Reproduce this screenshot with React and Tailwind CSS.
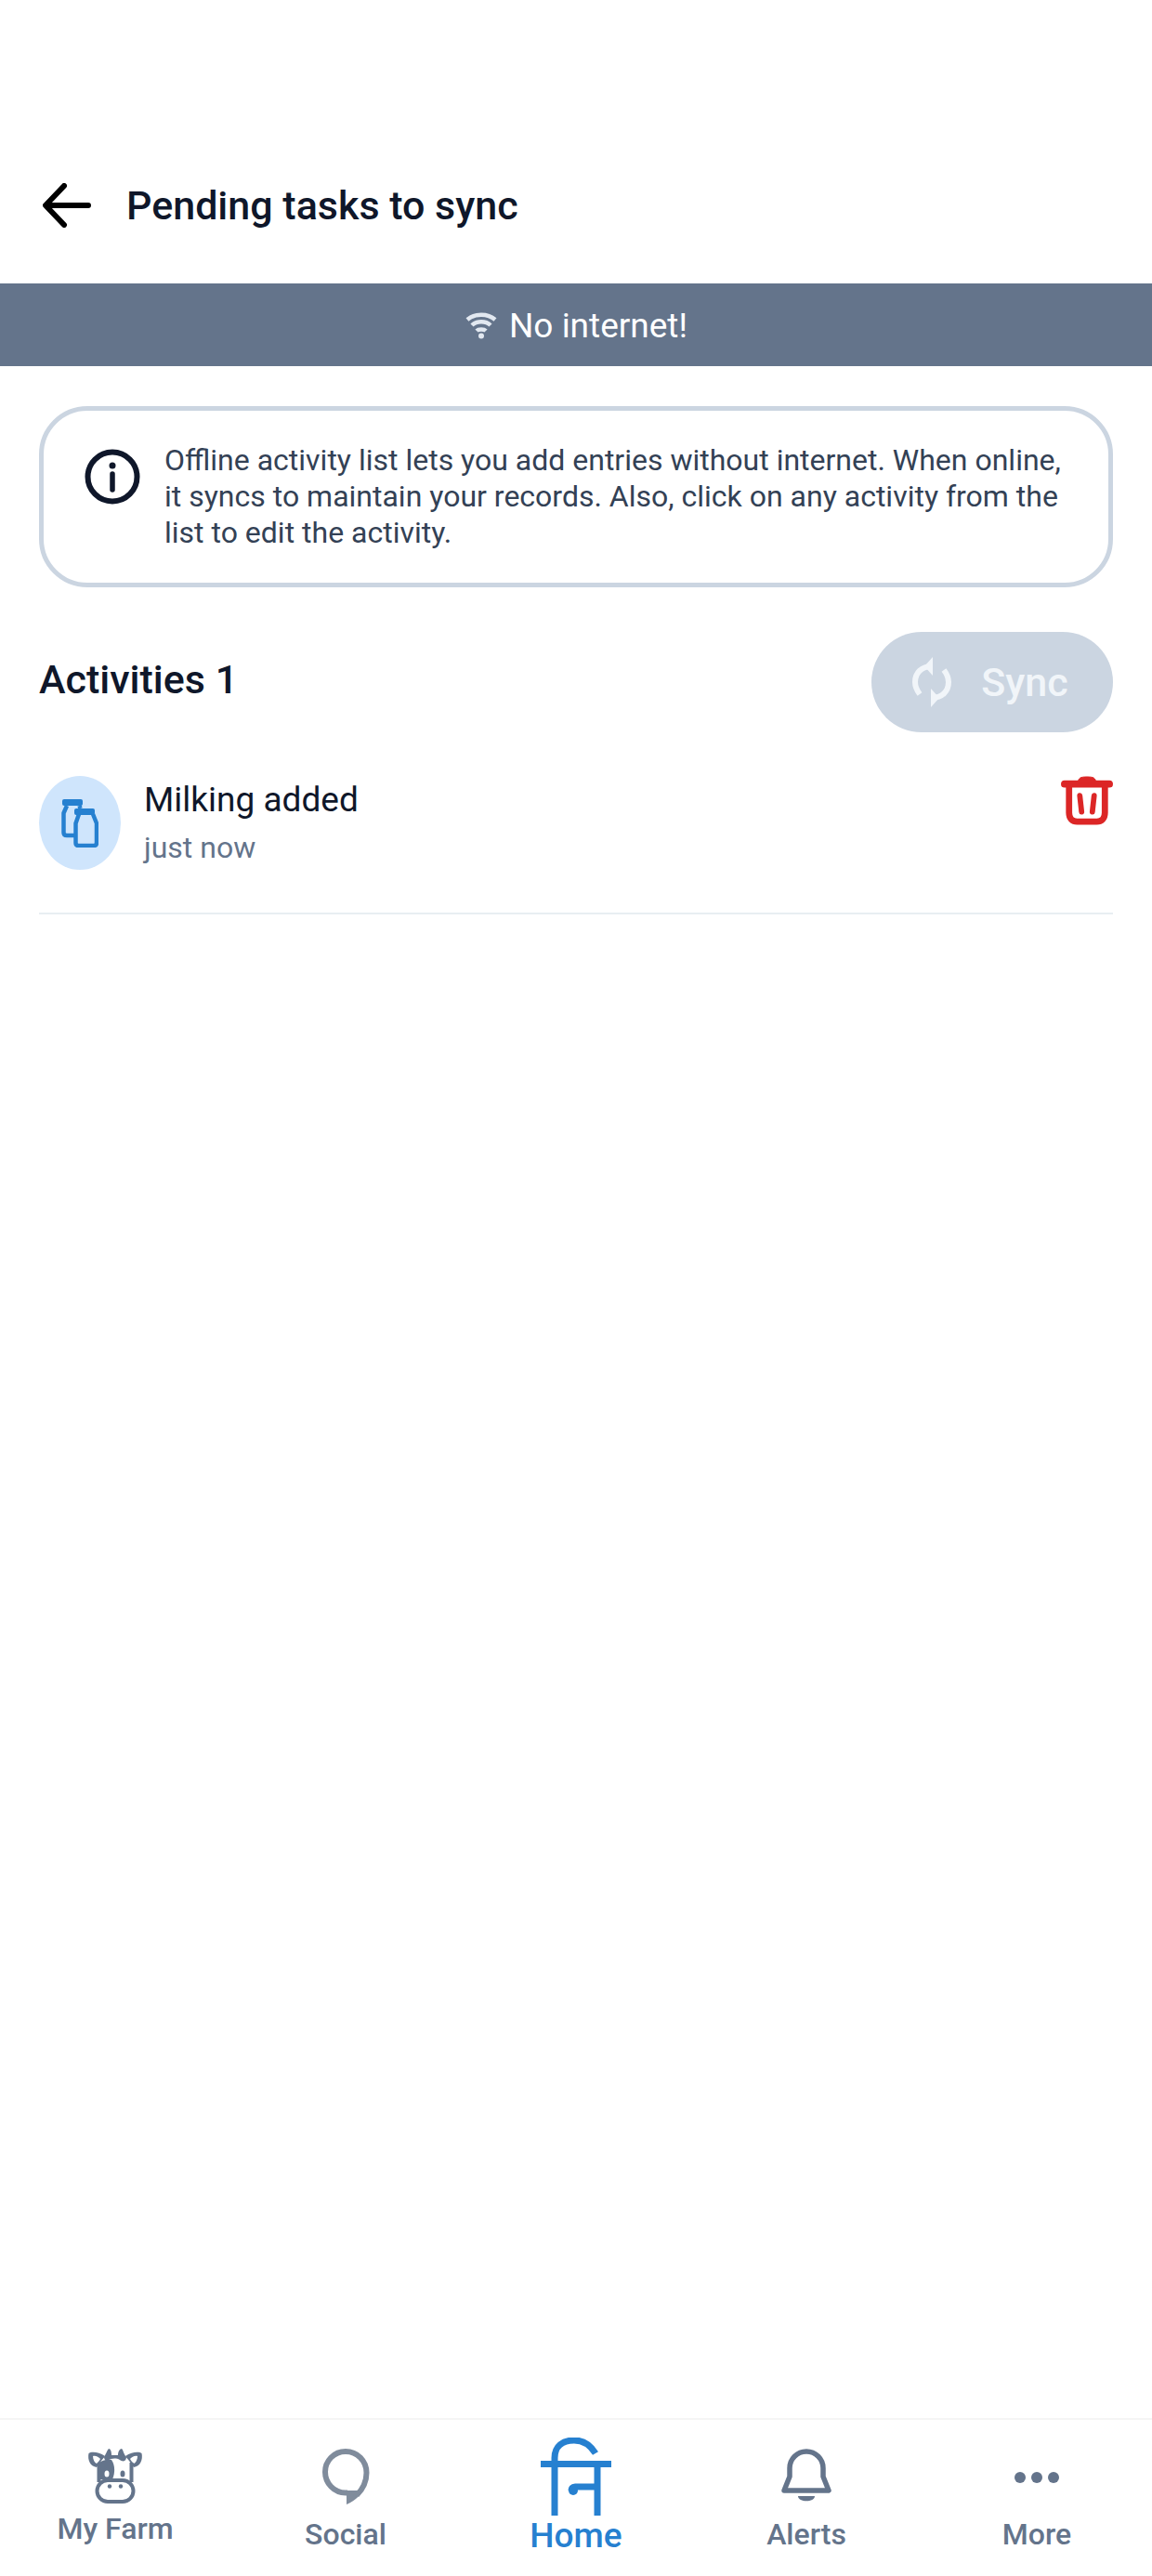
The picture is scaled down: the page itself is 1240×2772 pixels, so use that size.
const CowIcon = () => (
  <svg width="60" height="60" viewBox="0 0 60 60" fill="none">
    <path d="M19 8 C12 3 4 3 1.5 5 C0 12 3 19 10 20 L13 16 C16 11 18 10 19 8Z" fill="#64748b" />
    <path d="M41 8 C48 3 56 3 58.5 5 C60 12 57 19 50 20 L47 16 C44 11 42 10 41 8Z" fill="#64748b" />
    <path d="M6 8 C9 7 12 9 14 11 C13 13 11 15 10 16 C8 15 6 12 6 8Z" fill="#fff" />
    <path d="M54 8 C51 7 48 9 46 11 C47 13 49 15 50 16 C52 15 54 12 54 8Z" fill="#fff" />
    <path d="M18 9 C20 6 21 2 23 0 C25 0 26 3 26 7 H33 C33 3 35 0 37 0 C39 2 39 6 42 9 C42 13 39 15 35 12 C31 10 26 10 22 13 C20 13 18 12 18 9Z" fill="#64748b" />
    <path d="M12.5 17 V36 M47.5 15 V36" stroke="#64748b" strokeWidth="4" />
    <path d="M11 16 C16 12 22 11 26 12 C30 18 30 26 27 33 H11Z" fill="#64748b" />
    <ellipse cx="21" cy="27" rx="2.5" ry="3.5" fill="#fff" />
    <ellipse cx="38" cy="27" rx="2.5" ry="3.5" fill="#64748b" />
    <rect x="10.5" y="34" width="39" height="23" rx="11.5" fill="#fff" stroke="#64748b" strokeWidth="4" />
    <circle cx="24" cy="40.5" r="2.2" fill="#64748b" />
    <circle cx="36" cy="40.5" r="2.2" fill="#64748b" />
    <path d="M23 55 H37 C35 60 25 60 23 55Z" fill="#64748b" />
  </svg>
);

const SocialIcon = () => (
  <svg width="51" height="60" viewBox="0 0 51 60" fill="none">
    <path d="M27 47.5 H25 C12.5 47.5 3 37 3 25 C3 13 12.5 3 25 3 C37.5 3 47.5 13 47.5 26 C47.5 36 44 43 37 50" stroke="#808c9c" strokeWidth="6" />
    <path d="M26 45 H38 L42 41 C44 48 36 56 26 60Z" fill="#808c9c" />
  </svg>
);

const HomeIcon = () => (
  <svg width="76" height="84" viewBox="0 0 76 84" fill="none" stroke="#2680d0" strokeWidth="7">
    <path d="M0 28.5 H76" />
    <path d="M15 84 V22 C15 9 24 3 36 3 C46 3 54 9 59 17" strokeLinecap="butt" />
    <path d="M61 28 V84" />
    <path d="M61 53 H37 C34 53 33 55 33 57" />
    <circle cx="35" cy="57" r="5" fill="#2680d0" stroke="none" />
  </svg>
);

const BellIcon = () => (
  <svg width="54" height="57" viewBox="0 0 54 57" fill="none">
    <path d="M3 45 L9 30 V21 A18 18 0 0 1 45 21 V30 L51 45 Z" stroke="#64748b" strokeWidth="5.5" strokeLinejoin="round" />
    <path d="M18 51 H36 C36 58 18 58 18 51Z" fill="#64748b" />
  </svg>
);

const MoreIcon = () => (
  <svg width="48" height="14" viewBox="0 0 48 14" fill="#64748b">
    <circle cx="6" cy="7" r="6" />
    <circle cx="24" cy="7" r="6" />
    <circle cx="42" cy="7" r="6" />
  </svg>
);

const tabs = [
  { label: 'My Farm', icon: <CowIcon />, box: 'pt-[31px]', text: 'mt-[9px] text-[#64748b] text-[32px]' },
  { label: 'Social', icon: <SocialIcon />, box: 'pt-[31px]', text: 'mt-[15px] text-[#64748b] text-[32px]' },
  { label: 'Home', icon: <HomeIcon />, box: 'pt-[19px]', text: 'mt-[5px] text-[#2680d0] text-[37px]' },
  { label: 'Alerts', icon: <BellIcon />, box: 'pt-[31px]', text: 'mt-[18px] text-[#64748b] text-[32px]' },
  { label: 'More', icon: <MoreIcon />, box: 'pt-[55px]', text: 'mt-[37px] text-[#64748b] text-[32px]' },
];

export default function App() {
  return (
    <div className="h-[2772px] w-[1240px] flex flex-col bg-white font-['Roboto',sans-serif]">
      <div className="h-[305px] pt-[137px] pl-[46px] flex items-center">
        <svg width="52" height="48" viewBox="0 0 52 48" fill="none" stroke="#000" strokeWidth="6" strokeLinecap="round" strokeLinejoin="round">
          <path d="M49 24 H4 M23 3 L3 24 L23 45" />
        </svg>
        <h1 className="ml-[38px] text-[43px] font-medium text-[#0f172a]">Pending tasks to sync</h1>
      </div>

      <div className="h-[89px] pt-[2px] bg-[#64748b] flex items-center justify-center text-white text-[37px]">
        <svg width="36" height="29" viewBox="0 0 36 29" fill="none" stroke="#e2e8f0" strokeWidth="4.5" className="mr-[12px]">
          <path d="M3 8 C11 1 25 1 33 8" />
          <path d="M8 14 C13 9 23 9 28 14" />
          <path d="M13 20 C15 18 21 18 23 20" />
          <circle cx="18" cy="25.5" r="3" fill="#e2e8f0" stroke="none" />
        </svg>
        <span>No internet!</span>
      </div>

      <div className="mx-[42px] mt-[43px] h-[195px] border-[5px] border-[#cbd5e1] rounded-[52px] flex pl-[44px] pt-[34px]">
        <svg width="60" height="60" viewBox="0 0 60 60" fill="none" className="mt-[7px] shrink-0">
          <circle cx="30" cy="30" r="26.5" stroke="#0f172a" strokeWidth="6" />
          <circle cx="30" cy="18" r="3.5" fill="#0f172a" />
          <path d="M30 27 V44" stroke="#0f172a" strokeWidth="5.5" strokeLinecap="round" />
        </svg>
        <p className="ml-[26px] w-[990px] text-[32px] leading-[39px] text-[#334155]">
          Offline activity list lets you add entries without internet. When online, it syncs to maintain your records. Also, click on any activity from the list to edit the activity.
        </p>
      </div>

      <div className="mx-[42px] mt-[48px] flex items-center justify-between">
        <h2 className="-mt-[5px] text-[43px] font-medium text-[#0f172a]">Activities 1</h2>
        <button type="button" className="w-[260px] h-[108px] pr-[4px] rounded-[54px] bg-[#cbd5e1] flex items-center justify-center text-[43px] font-medium text-[#f1f5f9]">
          <svg width="42" height="56" viewBox="0 0 42 56" fill="none" stroke="#f1f5f9" strokeWidth="6" className="mr-[32px]">
            <path d="M21 11 C10 11 3 18 3 28 C3 33 5 37 8 41" />
            <path d="M21 45 C32 45 39 38 39 28 C39 23 37 19 34 15" />
            <path d="M22 1 L22 21 L13 11Z" fill="#f1f5f9" stroke="none" />
            <path d="M20 35 L20 55 L29 45Z" fill="#f1f5f9" stroke="none" />
          </svg>
          <span>Sync</span>
        </button>
      </div>

      <div className="mx-[42px] mt-[47px] h-[149px] border-b-2 border-[#e8eef2] flex items-start">
        <div className="w-[88px] h-[101px] rounded-[50%] bg-[#cfe5fc] flex items-center justify-center shrink-0">
          <svg width="40" height="52" viewBox="0 0 40 52" fill="none" stroke="#2680d0" strokeWidth="4.5" strokeLinejoin="round">
            <path d="M6 7 L2.5 15 V36 C2.5 38 3.5 39 6 39 H14" />
            <path d="M19.5 7 L20.5 10" />
            <rect x="1" y="0" width="22" height="7" rx="2" fill="#2680d0" stroke="none" />
            <path d="M19 16 L15.5 26 V47 C15.5 49 16.5 50 18.5 50 H35 C37 50 38 49 38 47 V26 L34 16" />
            <rect x="14" y="10" width="22" height="7" rx="2" fill="#2680d0" stroke="none" />
          </svg>
        </div>
        <div className="ml-[25px] flex-1">
          <p className="mt-[3px] text-[37px] leading-[46px] text-[#0f172a]">Milking added</p>
          <p className="mt-[7px] text-[32px] leading-[42px] text-[#64748b]">just now</p>
        </div>
        <svg width="56" height="54" viewBox="0 0 58 56" fill="none" stroke="#dc2626" className="shrink-0">
          <path d="M4 9 H54" strokeWidth="8" strokeLinecap="round" />
          <path d="M19 8 C19 2 22 1 29 1 C36 1 39 2 39 8Z" fill="#dc2626" strokeWidth="1" />
          <path d="M9 9 V41 C9 48 13 51 18 51 H40 C45 51 49 48 49 41 V9" strokeWidth="7" />
          <path d="M21 22 L23 40 M37 22 L35 40" strokeWidth="6" strokeLinecap="round" />
        </svg>
      </div>

      <div className="mt-auto h-[170px] border-t-2 border-[#f5f5f5] grid grid-cols-5">
        {tabs.map((tab) => (
          <div key={tab.label} className={`flex flex-col items-center ${tab.box}`}>
            {tab.icon}
            <span className={`font-medium leading-[34px] ${tab.text}`}>{tab.label}</span>
          </div>
        ))}
      </div>
    </div>
  );
}
